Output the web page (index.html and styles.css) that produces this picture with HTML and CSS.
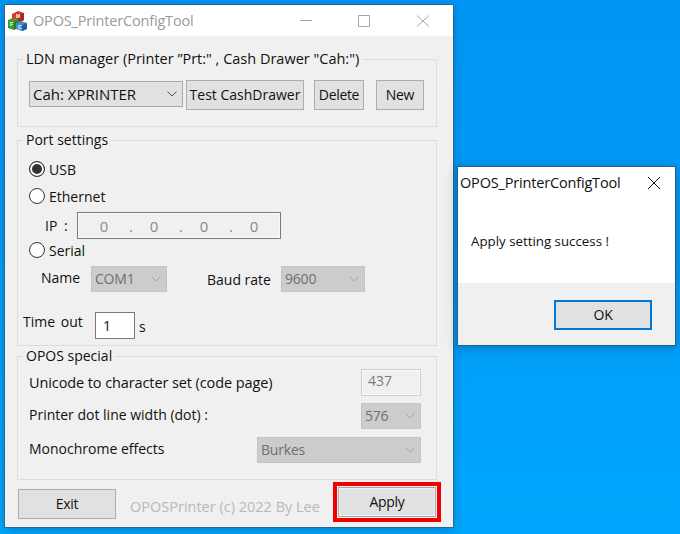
FILE: index.html
```html
<!DOCTYPE html>
<html lang="en">
<head>
<meta charset="utf-8">
<title>OPOS_PrinterConfigTool</title>
<link rel="stylesheet" href="styles.css">
</head>
<body>
<main class="desktop">
  <section class="window main-window">
    <header class="titlebar">
      <svg class="app-icon" width="20" height="20" viewBox="0 0 20 20">
        <path d="M4 3l6-3 6 2v7l-6 3-6-2z" fill="#d63a26"/>
        <path d="M10 3l6-1v7l-6 3z" fill="#a92a1a"/>
        <path d="M0 9l5-2 6 2v7l-5 3-6-2z" fill="#3f9a35"/>
        <path d="M6 11l5-2v7l-5 3z" fill="#2c7a28"/>
        <path d="M8 12l5-2 6 2v6l-5 2-6-2z" fill="#3b8fd0"/>
        <path d="M14 14l5-2v6l-5 2z" fill="#1f5f9c"/>
        <text x="8" y="7" class="icon-letter">M</text>
        <text x="2" y="15" class="icon-letter">F</text>
        <text x="10" y="18" class="icon-letter">C</text>
      </svg>
      <span class="title-text inactive">OPOS_PrinterConfigTool</span>
      <div class="caption-buttons">
        <svg width="14" height="14" viewBox="0 0 14 14"><path d="M1 6.5h12" stroke="#a6a6a6" fill="none"/></svg>
        <svg class="cap-max" width="14" height="14" viewBox="0 0 14 14"><path d="M2.5 1.5h11v11h-11z" stroke="#a6a6a6" fill="none"/></svg>
        <svg class="cap-close" width="14" height="14" viewBox="0 0 14 14"><path d="M1 1.5l12 11M13 1.5L1 12.5" stroke="#a6a6a6" fill="none"/></svg>
      </div>
    </header>
    <div class="form">
      <fieldset class="group group-ldn">
        <legend class="legend-wide">LDN manager (Printer ”Prt:" , Cash Drawer "Cah:")</legend>
        <div class="ldn-row">
          <div class="combo combo-ldn"><span>Cah: XPRINTER</span><svg class="chev" width="10" height="6" viewBox="0 0 10 6"><path d="M.5.5L5 5 9.500.5" stroke="#555" fill="none"/></svg></div>
          <button class="btn btn-test">Test CashDrawer</button>
          <button class="btn btn-delete">Delete</button>
          <button class="btn btn-new">New</button>
        </div>
      </fieldset>
      <fieldset class="group group-port">
        <legend>Port settings</legend>
        <div class="radio-row row-usb"><span class="radio checked"></span><span>USB</span></div>
        <div class="radio-row row-eth"><span class="radio"></span><span>Ethernet</span></div>
        <div class="ip-row"><span class="ip-label">IP :</span>
          <div class="ip-box"><span>0</span><i>.</i><span>0</span><i>.</i><span>0</span><i>.</i><span>0</span></div>
        </div>
        <div class="radio-row row-serial"><span class="radio"></span><span>Serial</span></div>
        <div class="serial-row">
          <span class="lbl-name">Name</span>
          <div class="combo disabled combo-com"><span>COM1</span><svg class="chev" width="10" height="6" viewBox="0 0 10 6"><path d="M.5.5L5 5 9.500.5" stroke="#a8a8a8" fill="none"/></svg></div>
          <span class="lbl-baud">Baud rate</span>
          <div class="combo disabled combo-baud"><span>9600</span><svg class="chev" width="10" height="6" viewBox="0 0 10 6"><path d="M.5.5L5 5 9.500.5" stroke="#a8a8a8" fill="none"/></svg></div>
        </div>
        <div class="timeout-row">
          <span class="lbl-time">Time out</span>
          <div class="time-input">1</div>
          <span class="lbl-s">s</span>
        </div>
      </fieldset>
      <fieldset class="group group-opos">
        <legend>OPOS special</legend>
        <div class="opos-row row-code"><span class="lbl-code">Unicode to character set (code page)</span><div class="readonly-box">437</div></div>
        <div class="opos-row row-dot"><span class="lbl-up">Printer dot line width (dot) :</span><div class="combo disabled combo-dot"><span>576</span><svg class="chev" width="10" height="6" viewBox="0 0 10 6"><path d="M.5.5L5 5 9.500.5" stroke="#a8a8a8" fill="none"/></svg></div></div>
        <div class="opos-row row-mono"><span class="lbl-up">Monochrome effects</span><div class="combo disabled combo-mono"><span>Burkes</span><svg class="chev" width="10" height="6" viewBox="0 0 10 6"><path d="M.5.5L5 5 9.500.5" stroke="#a8a8a8" fill="none"/></svg></div></div>
      </fieldset>
      <footer class="actions">
        <button class="btn btn-exit">Exit</button>
        <span class="copyright">OPOSPrinter (c) 2022 By Lee</span>
        <div class="apply-highlight"><button class="btn btn-apply">Apply</button></div>
      </footer>
    </div>
  </section>

  <section class="window dialog">
    <header class="dialog-title">
      <span class="title-text">OPOS_PrinterConfigTool</span>
      <svg width="14" height="14" viewBox="0 0 14 14"><path d="M1 1l12 12M13 1L1 13" stroke="#111" fill="none"/></svg>
    </header>
    <div class="dialog-body">Apply setting success !</div>
    <div class="dialog-foot"><button class="btn btn-ok">OK</button></div>
  </section>
</main>
</body>
</html>
```
FILE: styles.css
```css
* { box-sizing: border-box; }
html, body { margin: 0; padding: 0; }
body {
  width: 680px;
  height: 534px;
  overflow: hidden;
  font-family: "Open Sans", "Noto Sans", sans-serif;
  font-size: 14px;
  color: #111;
}
.desktop {
  position: relative;
  width: 680px;
  height: 534px;
  background: linear-gradient(180deg, #0096f4 0%, #009cf6 45%, #00a6fb 100%);
  overflow: hidden;
}
.window { position: absolute; display: flex; flex-direction: column; }
.main-window {
  left: 5px; top: 5px; width: 448px; height: 522px;
  background: #f0f0f0;
  box-shadow: 0 0 0 1px rgba(60, 80, 100, 0.55), 0 2px 10px rgba(0, 40, 80, 0.35);
}
.titlebar {
  height: 31px;
  background: #fff;
  display: flex;
  align-items: center;
  padding-left: 3px;
  flex: none;
}
.app-icon { flex: none; }
.icon-letter { font-size: 5px; font-weight: 700; fill: #fff; font-family: "Liberation Sans", sans-serif; }
.title-text { font-size: 14.5px; letter-spacing: -0.17px; white-space: nowrap; }
.title-text.inactive { color: #9a9a9a; margin-left: 5px; }
.caption-buttons { margin-left: auto; display: flex; padding-right: 23px; }
.cap-max { margin-left: 43px; }
.cap-close { margin-left: 46px; }
.form { flex: 1; display: flex; flex-direction: column; padding: 14px 16px 0 12px; }
.group {
  margin: 0;
  padding: 0;
  border: 1px solid #dcdcdc;
  min-width: 0;
  display: block;
}
.group legend {
  padding: 0 3px;
  margin-left: -6px;
  line-height: 18px;
  font-size: 14px;
  white-space: nowrap;
}
.group legend.legend-wide { font-size: 14.5px; }
.group-ldn { height: 77px; padding-top: 12px; padding-left: 11px; }
.group-port { height: 215px; margin-top: 4px; padding-left: 11px; }
.group-opos { height: 133px; margin-top: 1px; padding-left: 11px; }

.ldn-row { display: flex; align-items: center; }
.combo {
  display: flex; align-items: center; justify-content: space-between;
  height: 26px; background: #e1e1e1; border: 1px solid #a9a9a9;
  padding: 0 5px 0 3px;
  line-height: 1;
}
.combo.disabled { background: #cccccc; border-color: #c4c4c4; color: #6f6f6f; letter-spacing: -0.2px; }
.combo-ldn { width: 154px; margin-top: -2px; font-size: 15px; }
.combo-com { width: 76px; }
.combo-baud { width: 84px; }
.combo-dot { width: 60px; }
.combo-mono { width: 164px; }
.btn {
  font: inherit;
  font-size: 14px;
  letter-spacing: -0.33px;
  color: #111;
  height: 30px;
  background: #e1e1e1;
  border: 1px solid #adadad;
  padding: 0;
  line-height: 1;
  flex: none;
}
.btn-test { width: 118px; margin-left: 3px; letter-spacing: 0; }
.btn-delete { width: 50px; margin-left: 10px; }
.btn-new { width: 48px; margin-left: 12px; }

.radio-row { display: flex; align-items: center; gap: 4px; height: 16px; }
.radio {
  width: 16px; height: 16px; border-radius: 50%;
  border: 1px solid #333; background: #fff; flex: none;
}
.radio.checked { background: #333; box-shadow: inset 0 0 0 2px #fff; }
.row-usb { margin-top: 12px; }
.row-eth { margin-top: 11px; }
.ip-row { display: flex; align-items: center; height: 27px; margin-top: 8px; }
.ip-label { width: 48px; padding-left: 16px; word-spacing: 3px; }
.ip-box {
  width: 204px; height: 27px; background: #f0f0f0;
  border: 1px solid #7a7a7a;
  box-shadow: inset 0 0 0 1px #fbfbfb;
  display: flex; align-items: center;
  color: #8a8a8a;
  padding-left: 19px;
  font-size: 15px;
}
.ip-box span { width: 14px; text-align: center; }
.ip-box i { font-style: normal; width: 36px; text-align: center; padding-left: 4px; }
.row-serial { margin-top: 3px; }
.serial-row { display: flex; align-items: center; height: 26px; margin-top: 8px; }
.lbl-name { width: 62px; padding-left: 12px; margin-top: -3px; }
.lbl-baud { width: 114px; padding-left: 40px; }
.timeout-row { display: flex; align-items: center; height: 27px; margin-top: 20px; margin-left: -6px; }
.lbl-time { width: 72px; margin-bottom: 9px; word-spacing: 2px; }
.time-input {
  width: 40px; height: 27px; background: #fff; border: 1px solid #7a7a7a;
  display: flex; align-items: center; padding-left: 7px; color: #111;
}
.lbl-s { margin-left: 4px; margin-top: 1px; }

.opos-row { display: flex; align-items: center; justify-content: space-between; padding-right: 15px; }
.lbl-code { font-size: 14.5px; letter-spacing: -0.1px; }
.row-code { margin-top: 4px; height: 27px; }
.row-dot { margin-top: 7px; height: 26px; }
.row-dot .lbl-up { margin-top: -3px; }
.row-mono { margin-top: 8px; height: 26px; }
.row-mono .lbl-up { margin-top: -4px; }
.readonly-box {
  width: 60px; height: 27px; background: #f0f0f0; border: 1px solid #cfcfcf;
  box-shadow: inset 0 0 0 1px #fafafa;
  color: #7a7a7a; padding-left: 6px; line-height: 22px;
}

.actions { display: flex; align-items: center; margin-top: 2px; height: 40px; margin-left: 1px; margin-right: -4px; }
.btn-exit { width: 98px; margin-top: 4px; }
.copyright { margin-left: 14px; color: #b8b8b8; font-size: 14.5px; white-space: nowrap; margin-top: 9px; }
.apply-highlight { margin-left: auto; border: 4px solid #f00000; padding: 1px; height: 40px; width: 108px; }
.btn-apply { width: 98px; height: 30px; border-color: #a8a8a8; box-shadow: inset 0 0 0 1px #f0f0f0; display: block; }

.dialog {
  left: 457px; top: 166px; width: 219px; height: 180px;
  background: #fff;
  border: 1px solid #2f5f80;
  box-shadow: 0 2px 10px rgba(0, 40, 80, 0.35);
}
.dialog-title { height: 31px; display: flex; align-items: center; justify-content: space-between; padding: 0 14px 0 2px; flex: none; }
.dialog-body { flex: 1; padding: 34px 0 0 13px; font-size: 13.3px; }
.dialog-foot { height: 62px; background: #f0f0f0; display: flex; align-items: flex-start; justify-content: flex-end; padding: 17px 23px 0 0; flex: none; }
.btn-ok { width: 98px; height: 30px; border: 2px solid #0078d7; }
```
